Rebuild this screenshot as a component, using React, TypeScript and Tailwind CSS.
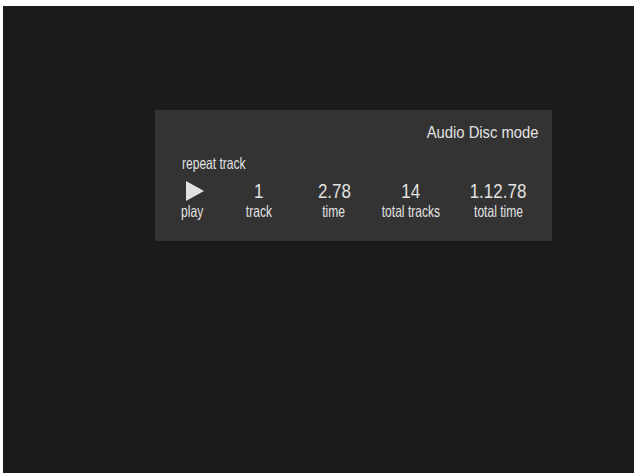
const stats = [
  { value: '1', label: 'track', gap: 'ml-px' },
  { value: '2.78', label: 'time', gap: 'ml-[11px]' },
  { value: '14', label: 'total tracks', gap: 'ml-[13px]' },
  { value: '1.12.78', label: 'total time', gap: 'ml-[23px]' },
];

export default function App() {
  return (
    <div className="w-[634px] h-[473px] bg-white pt-[6px] pl-[3px]">
      <div
        className="w-full h-full bg-[#1b1b1b] pt-[104px] pl-[152px] text-[#e2e2e2]"
        style={{ fontFamily: '"Liberation Sans", Arial, sans-serif' }}
      >
        {/* status panel */}
        <div className="w-[397px] h-[131px] bg-[#333333] pt-[13px] px-[7px]">
          <div className="flex justify-end pr-[6px]">
            <span className="block whitespace-nowrap text-[17px] leading-[20px] scale-x-[0.87] origin-right">
              Audio Disc mode
            </span>
          </div>

          <div className="mt-[12px] pl-[20px]">
            <span className="block whitespace-nowrap text-[16.5px] leading-[17px] scale-x-[0.73] origin-left">
              repeat track
            </span>
          </div>

          <div className="flex items-start mt-[6px]">
            <div className="w-[64px] flex flex-col items-center">
              <div className="h-[25px] flex items-center">
                <svg width="18" height="20" viewBox="0 0 18 20" className="ml-[2px]">
                  <path d="M0 0 L18 10 L0 20 Z" fill="#e2e2e2" />
                </svg>
              </div>
              <span className="block whitespace-nowrap text-[16.5px] leading-[17px] scale-x-[0.73] -ml-[3px]">
                play
              </span>
            </div>
            {stats.map((s) => (
              <div key={s.label} className={`w-[64px] flex flex-col items-center ${s.gap}`}>
                <span className="block whitespace-nowrap text-[21px] leading-[25px] scale-x-[0.81]">
                  {s.value}
                </span>
                <span className="block whitespace-nowrap text-[16.5px] leading-[17px] scale-x-[0.73]">
                  {s.label}
                </span>
              </div>
            ))}
          </div>
        </div>
      </div>
    </div>
  );
}
